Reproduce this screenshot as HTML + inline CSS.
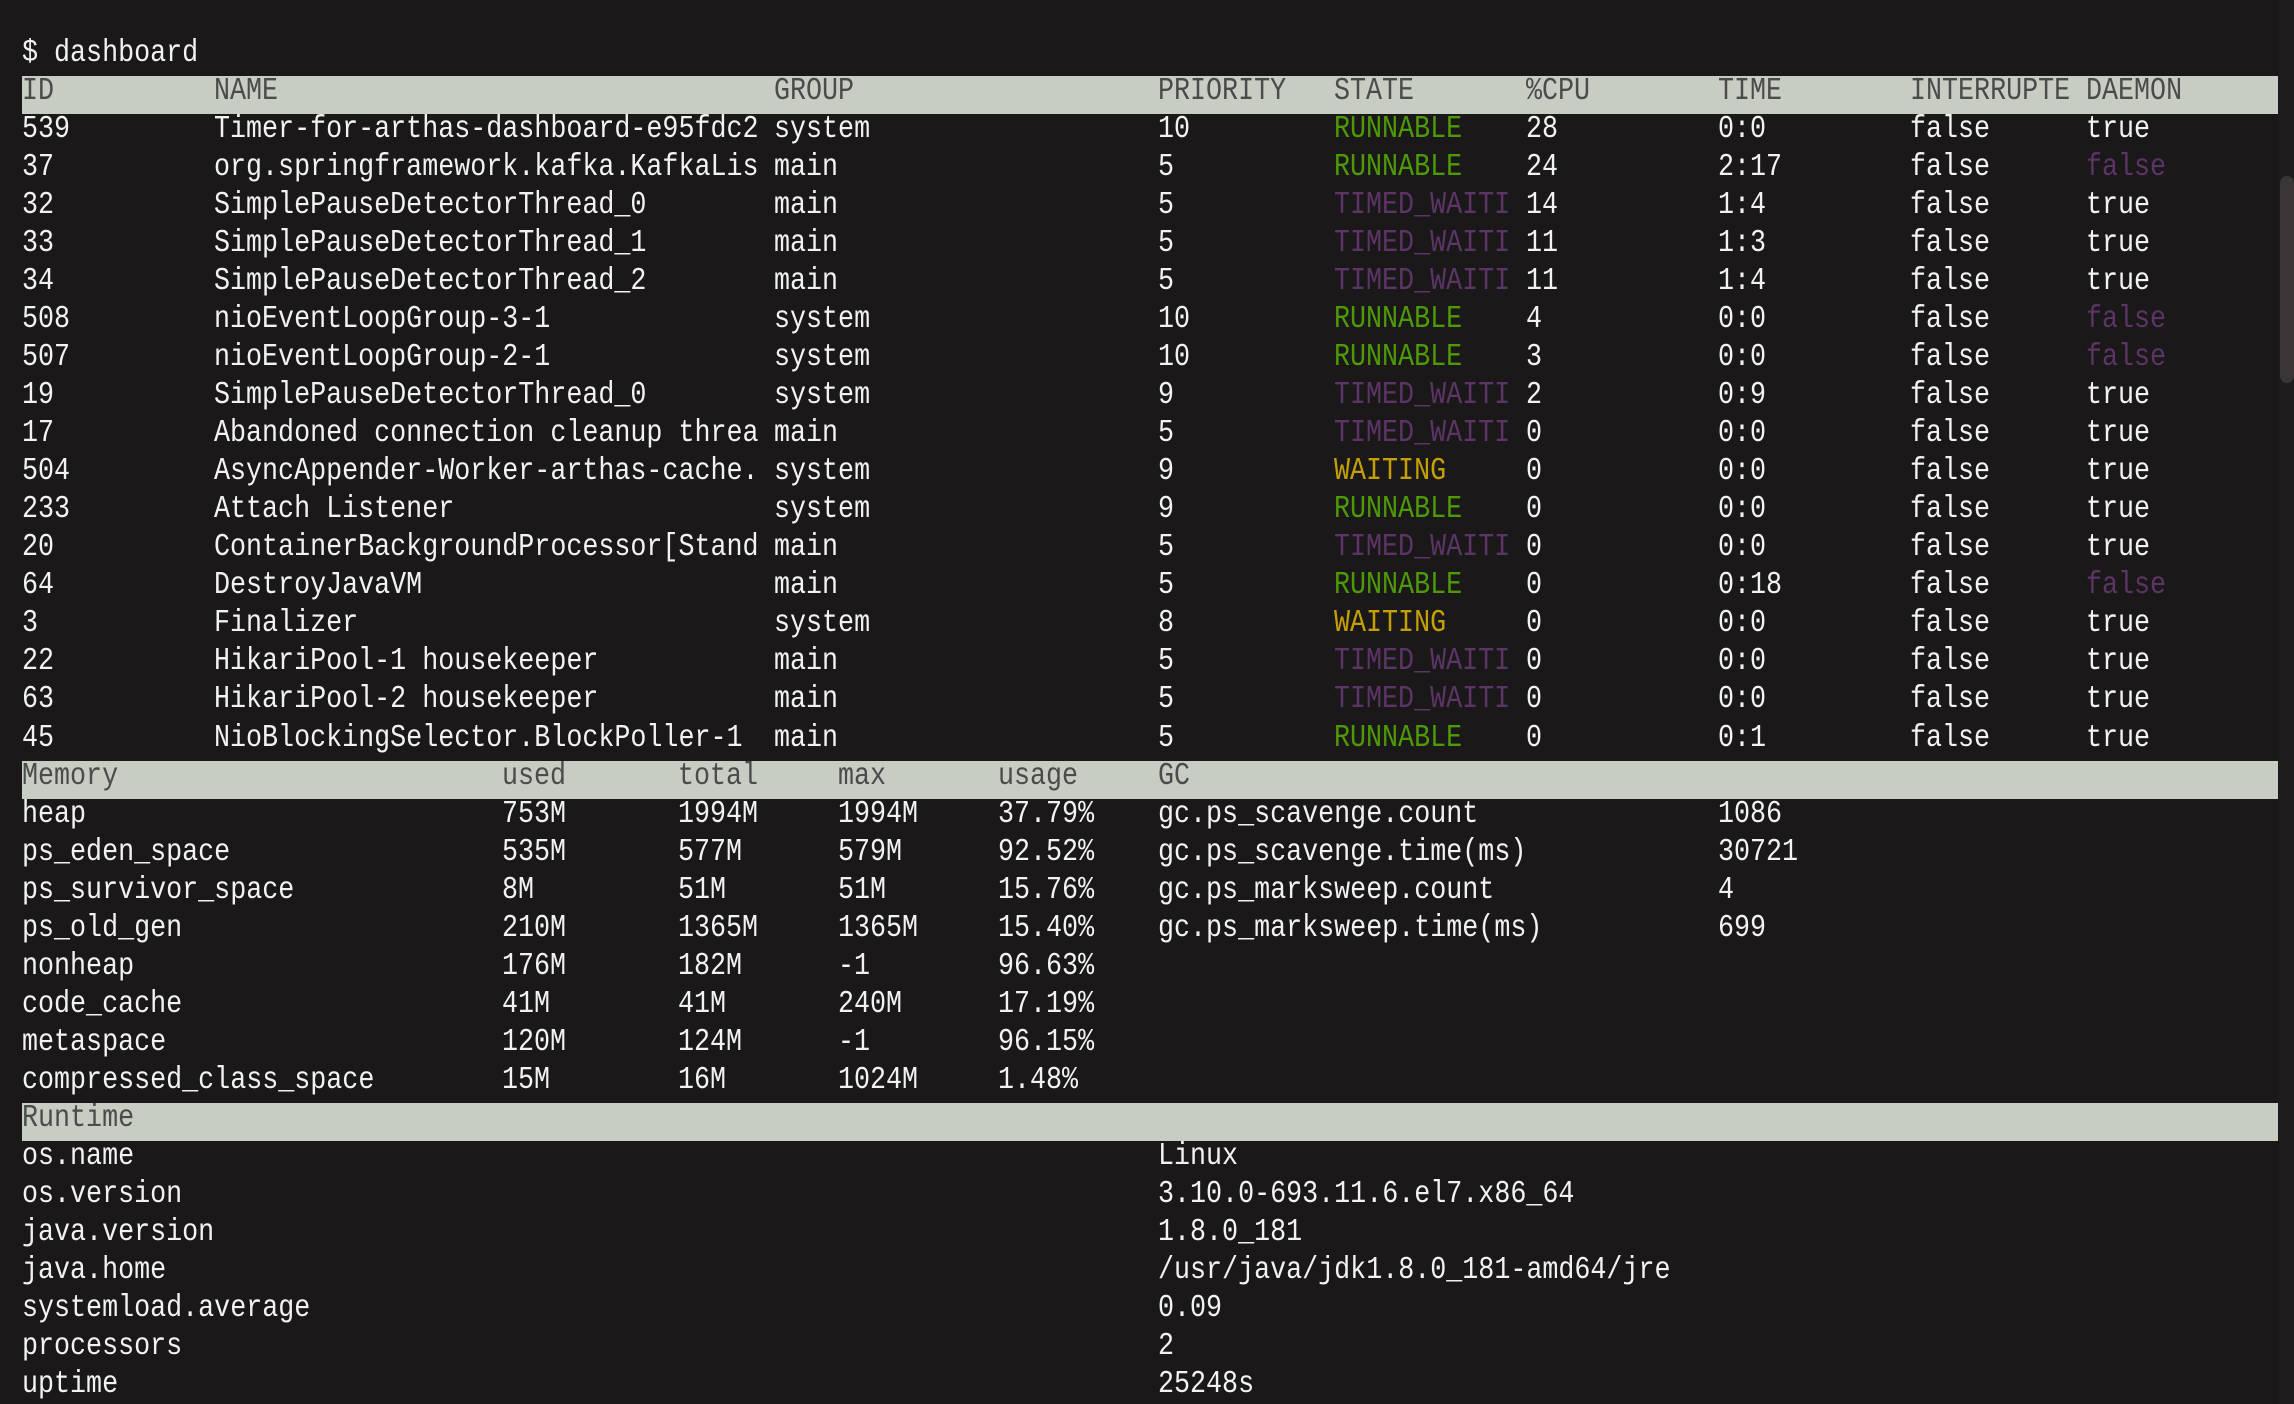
<!DOCTYPE html>
<html><head><meta charset="utf-8"><style>
html,body{margin:0;padding:0;background:#1a1819;width:2294px;height:1404px;overflow:hidden;}
body{position:relative;font-family:"Liberation Mono","DejaVu Sans Mono",monospace;font-size:26.7px;color:#f2f2f2;}
.bar{position:absolute;left:22px;width:2256px;height:38px;background:#c8cdc4;}
.r{position:absolute;left:22px;width:2256px;height:38px;line-height:38px;white-space:pre;transform:translateY(-2px) scaleY(1.18);transform-origin:0 26px;}
.r span{position:absolute;top:0;}
.h{color:#4b4b4b;}
.a{left:0}.b{left:192px}.c{left:752px}.d{left:1136px}.e{left:1312px}.f{left:1504px}.g{left:1696px}.k{left:1888px}.l{left:2064px}
.mu{left:480px}.mt{left:656px}.mm{left:816px}.mg{left:976px}
.G{color:#4e9a06}.P{color:#5c3566}.Y{color:#c4a000}
.track{position:absolute;left:2279px;top:0;width:15px;height:1404px;background:#1e1c1d;}
.thumb{position:absolute;left:2280px;top:176px;width:14px;height:207px;background:#3b3636;border-radius:7px;}
</style></head><body>
<div class="track"></div><div class="thumb"></div>
<div class="bar" style="top:76px"></div>
<div class="bar" style="top:761px"></div>
<div class="bar" style="top:1103px"></div>

<div class="r" style="top:38px"><span class="a">$ dashboard</span></div>
<div class="r h" style="top:76px"><span class="a">ID</span><span class="b">NAME</span><span class="c">GROUP</span><span class="d">PRIORITY</span><span class="e">STATE</span><span class="f">%CPU</span><span class="g">TIME</span><span class="k">INTERRUPTE</span><span class="l">DAEMON</span></div>
<div class="r" style="top:114px"><span class="a">539</span><span class="b">Timer-for-arthas-dashboard-e95fdc2</span><span class="c">system</span><span class="d">10</span><span class="e G">RUNNABLE</span><span class="f">28</span><span class="g">0:0</span><span class="k">false</span><span class="l">true</span></div>
<div class="r" style="top:152px"><span class="a">37</span><span class="b">org.springframework.kafka.KafkaLis</span><span class="c">main</span><span class="d">5</span><span class="e G">RUNNABLE</span><span class="f">24</span><span class="g">2:17</span><span class="k">false</span><span class="l P">false</span></div>
<div class="r" style="top:190px"><span class="a">32</span><span class="b">SimplePauseDetectorThread_0</span><span class="c">main</span><span class="d">5</span><span class="e P">TIMED_WAITI</span><span class="f">14</span><span class="g">1:4</span><span class="k">false</span><span class="l">true</span></div>
<div class="r" style="top:228px"><span class="a">33</span><span class="b">SimplePauseDetectorThread_1</span><span class="c">main</span><span class="d">5</span><span class="e P">TIMED_WAITI</span><span class="f">11</span><span class="g">1:3</span><span class="k">false</span><span class="l">true</span></div>
<div class="r" style="top:266px"><span class="a">34</span><span class="b">SimplePauseDetectorThread_2</span><span class="c">main</span><span class="d">5</span><span class="e P">TIMED_WAITI</span><span class="f">11</span><span class="g">1:4</span><span class="k">false</span><span class="l">true</span></div>
<div class="r" style="top:304px"><span class="a">508</span><span class="b">nioEventLoopGroup-3-1</span><span class="c">system</span><span class="d">10</span><span class="e G">RUNNABLE</span><span class="f">4</span><span class="g">0:0</span><span class="k">false</span><span class="l P">false</span></div>
<div class="r" style="top:342px"><span class="a">507</span><span class="b">nioEventLoopGroup-2-1</span><span class="c">system</span><span class="d">10</span><span class="e G">RUNNABLE</span><span class="f">3</span><span class="g">0:0</span><span class="k">false</span><span class="l P">false</span></div>
<div class="r" style="top:380px"><span class="a">19</span><span class="b">SimplePauseDetectorThread_0</span><span class="c">system</span><span class="d">9</span><span class="e P">TIMED_WAITI</span><span class="f">2</span><span class="g">0:9</span><span class="k">false</span><span class="l">true</span></div>
<div class="r" style="top:418px"><span class="a">17</span><span class="b">Abandoned connection cleanup threa</span><span class="c">main</span><span class="d">5</span><span class="e P">TIMED_WAITI</span><span class="f">0</span><span class="g">0:0</span><span class="k">false</span><span class="l">true</span></div>
<div class="r" style="top:456px"><span class="a">504</span><span class="b">AsyncAppender-Worker-arthas-cache.</span><span class="c">system</span><span class="d">9</span><span class="e Y">WAITING</span><span class="f">0</span><span class="g">0:0</span><span class="k">false</span><span class="l">true</span></div>
<div class="r" style="top:494px"><span class="a">233</span><span class="b">Attach Listener</span><span class="c">system</span><span class="d">9</span><span class="e G">RUNNABLE</span><span class="f">0</span><span class="g">0:0</span><span class="k">false</span><span class="l">true</span></div>
<div class="r" style="top:532px"><span class="a">20</span><span class="b">ContainerBackgroundProcessor[Stand</span><span class="c">main</span><span class="d">5</span><span class="e P">TIMED_WAITI</span><span class="f">0</span><span class="g">0:0</span><span class="k">false</span><span class="l">true</span></div>
<div class="r" style="top:570px"><span class="a">64</span><span class="b">DestroyJavaVM</span><span class="c">main</span><span class="d">5</span><span class="e G">RUNNABLE</span><span class="f">0</span><span class="g">0:18</span><span class="k">false</span><span class="l P">false</span></div>
<div class="r" style="top:608px"><span class="a">3</span><span class="b">Finalizer</span><span class="c">system</span><span class="d">8</span><span class="e Y">WAITING</span><span class="f">0</span><span class="g">0:0</span><span class="k">false</span><span class="l">true</span></div>
<div class="r" style="top:646px"><span class="a">22</span><span class="b">HikariPool-1 housekeeper</span><span class="c">main</span><span class="d">5</span><span class="e P">TIMED_WAITI</span><span class="f">0</span><span class="g">0:0</span><span class="k">false</span><span class="l">true</span></div>
<div class="r" style="top:684px"><span class="a">63</span><span class="b">HikariPool-2 housekeeper</span><span class="c">main</span><span class="d">5</span><span class="e P">TIMED_WAITI</span><span class="f">0</span><span class="g">0:0</span><span class="k">false</span><span class="l">true</span></div>
<div class="r" style="top:723px"><span class="a">45</span><span class="b">NioBlockingSelector.BlockPoller-1</span><span class="c">main</span><span class="d">5</span><span class="e G">RUNNABLE</span><span class="f">0</span><span class="g">0:1</span><span class="k">false</span><span class="l">true</span></div>

<div class="r h" style="top:761px"><span class="a">Memory</span><span class="mu">used</span><span class="mt">total</span><span class="mm">max</span><span class="mg">usage</span><span class="d">GC</span></div>
<div class="r" style="top:799px"><span class="a">heap</span><span class="mu">753M</span><span class="mt">1994M</span><span class="mm">1994M</span><span class="mg">37.79%</span><span class="d">gc.ps_scavenge.count</span><span class="g">1086</span></div>
<div class="r" style="top:837px"><span class="a">ps_eden_space</span><span class="mu">535M</span><span class="mt">577M</span><span class="mm">579M</span><span class="mg">92.52%</span><span class="d">gc.ps_scavenge.time(ms)</span><span class="g">30721</span></div>
<div class="r" style="top:875px"><span class="a">ps_survivor_space</span><span class="mu">8M</span><span class="mt">51M</span><span class="mm">51M</span><span class="mg">15.76%</span><span class="d">gc.ps_marksweep.count</span><span class="g">4</span></div>
<div class="r" style="top:913px"><span class="a">ps_old_gen</span><span class="mu">210M</span><span class="mt">1365M</span><span class="mm">1365M</span><span class="mg">15.40%</span><span class="d">gc.ps_marksweep.time(ms)</span><span class="g">699</span></div>
<div class="r" style="top:951px"><span class="a">nonheap</span><span class="mu">176M</span><span class="mt">182M</span><span class="mm">-1</span><span class="mg">96.63%</span></div>
<div class="r" style="top:989px"><span class="a">code_cache</span><span class="mu">41M</span><span class="mt">41M</span><span class="mm">240M</span><span class="mg">17.19%</span></div>
<div class="r" style="top:1027px"><span class="a">metaspace</span><span class="mu">120M</span><span class="mt">124M</span><span class="mm">-1</span><span class="mg">96.15%</span></div>
<div class="r" style="top:1065px"><span class="a">compressed_class_space</span><span class="mu">15M</span><span class="mt">16M</span><span class="mm">1024M</span><span class="mg">1.48%</span></div>

<div class="r h" style="top:1103px"><span class="a">Runtime</span></div>
<div class="r" style="top:1141px"><span class="a">os.name</span><span class="d">Linux</span></div>
<div class="r" style="top:1179px"><span class="a">os.version</span><span class="d">3.10.0-693.11.6.el7.x86_64</span></div>
<div class="r" style="top:1217px"><span class="a">java.version</span><span class="d">1.8.0_181</span></div>
<div class="r" style="top:1255px"><span class="a">java.home</span><span class="d">/usr/java/jdk1.8.0_181-amd64/jre</span></div>
<div class="r" style="top:1293px"><span class="a">systemload.average</span><span class="d">0.09</span></div>
<div class="r" style="top:1331px"><span class="a">processors</span><span class="d">2</span></div>
<div class="r" style="top:1369px"><span class="a">uptime</span><span class="d">25248s</span></div>
</body></html>
